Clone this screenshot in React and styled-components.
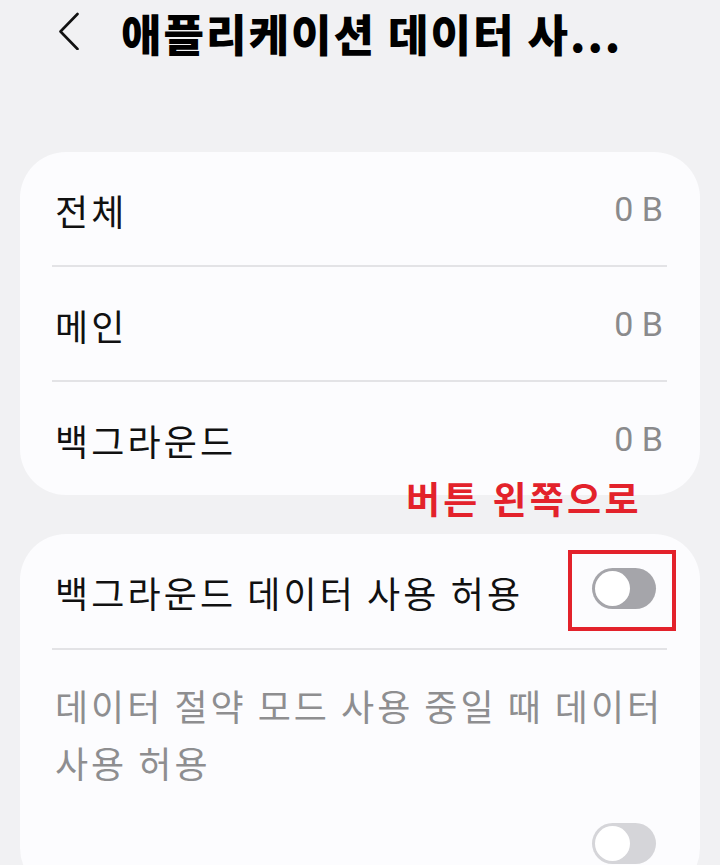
import React from "react";
import styled, { createGlobalStyle } from "styled-components";

const Global = createGlobalStyle`
  html, body { margin: 0; padding: 0; background: #f1f1f3; }
  body { font-family: "Noto Sans CJK KR", "Noto Sans", sans-serif; }
  * { box-sizing: border-box; }
`;

const Page = styled.div`
  position: relative;
  width: 720px;
  height: 865px;
  overflow: hidden;
  background: #f1f1f3;
  padding: 0 20px;
`;

const Header = styled.header`
  height: 66px;
  display: flex;
  align-items: center;
  padding-left: 38px;
  gap: 41px;
`;

const BackButton = styled.button`
  border: 0;
  background: none;
  padding: 0;
  width: 22px;
  height: 38px;
  display: flex;
  align-items: center;
  justify-content: center;
  margin-top: -4px;
`;

const Title = styled.h1`
  margin: 0;
  font-size: 44px;
  font-weight: 900;
  color: #000;
  letter-spacing: 2px;
  white-space: nowrap;
  line-height: 1;
`;

const Card = styled.section`
  background: #fcfcfe;
  border-radius: 46px;
  margin-top: ${(p) => p.$mt}px;
  overflow: hidden;
`;

const Row = styled.div`
  height: ${(p) => p.$h || 113}px;
  display: flex;
  align-items: center;
  justify-content: space-between;
  padding: 0 37px 0 35px;
`;

const Label = styled.span`
  font-size: 36px;
  color: #111;
  line-height: 1;
  padding-top: 2px;
  letter-spacing: 3.1px;
`;

const Value = styled.span`
  font-family: Roboto, "Noto Sans", sans-serif;
  font-size: 34px;
  color: #8a8a8c;
  line-height: 1;
`;

const Divider = styled.div`
  height: 2px;
  margin: 0 33px 0 32px;
  background: #e3e3e6;
`;

const ToggleWrap = styled.div`
  position: relative;
  margin-right: 7px;
  margin-top: -5px;
`;

const Toggle = styled.div`
  width: 64px;
  height: 41px;
  border-radius: 21px;
  background: ${(p) => p.$color};
  position: relative;
  &::after {
    content: "";
    position: absolute;
    left: 3px;
    top: 3px;
    width: 35px;
    height: 35px;
    border-radius: 50%;
    background: #fff;
  }
`;

const Highlight = styled.div`
  position: absolute;
  left: -24px;
  top: -18px;
  width: 108px;
  height: 81px;
  border: 4px solid #e3222b;
`;

const Annotation = styled.div`
  position: absolute;
  left: 406px;
  top: 476px;
  font-size: 37px;
  font-weight: 700;
  color: #e3222b;
  line-height: 1.2;
  letter-spacing: 3.3px;
  white-space: nowrap;
`;

const DescRow = styled.div`
  padding: 27px 37px 0 35px;
  display: flex;
  flex-direction: column;
`;

const Desc = styled.p`
  margin: 0;
  font-size: 36px;
  line-height: 57px;
  color: #8e8e90;
  letter-spacing: 3px;
  white-space: nowrap;
`;

const BottomToggle = styled.div`
  align-self: flex-end;
  margin-top: 32px;
  margin-right: 7px;
  padding-bottom: 30px;
`;

function Chevron() {
  return (
    <svg width="22" height="38" viewBox="0 0 22 38" fill="none">
      <path d="M19.5 2 L2.5 19.5 L19.5 37" stroke="#111" strokeWidth="2.6" strokeLinecap="round" strokeLinejoin="round" />
    </svg>
  );
}

const usage = [
  { label: "전체", value: "0 B" },
  { label: "메인", value: "0 B" },
  { label: "백그라운드", value: "0 B" },
];

export default function App() {
  return (
    <>
      <Global />
      <Page>
        <Header>
          <BackButton aria-label="뒤로">
            <Chevron />
          </BackButton>
          <Title>애플리케이션 데이터 사...</Title>
        </Header>

        <Card $mt={86}>
          {usage.map((u, i) => (
            <React.Fragment key={u.label}>
              {i > 0 && <Divider />}
              <Row>
                <Label>{u.label}</Label>
                <Value>{u.value}</Value>
              </Row>
            </React.Fragment>
          ))}
        </Card>

        <Card $mt={39}>
          <Row $h={114}>
            <Label>백그라운드 데이터 사용 허용</Label>
            <ToggleWrap>
              <Toggle $color="#a5a5aa" />
              <Highlight />
            </ToggleWrap>
          </Row>
          <Divider />
          <DescRow>
            <Desc>데이터 절약 모드 사용 중일 때 데이터<br />사용 허용</Desc>
            <BottomToggle>
              <Toggle $color="#d5d5d9" />
            </BottomToggle>
          </DescRow>
        </Card>

        <Annotation>버튼 왼쪽으로</Annotation>
      </Page>
    </>
  );
}
